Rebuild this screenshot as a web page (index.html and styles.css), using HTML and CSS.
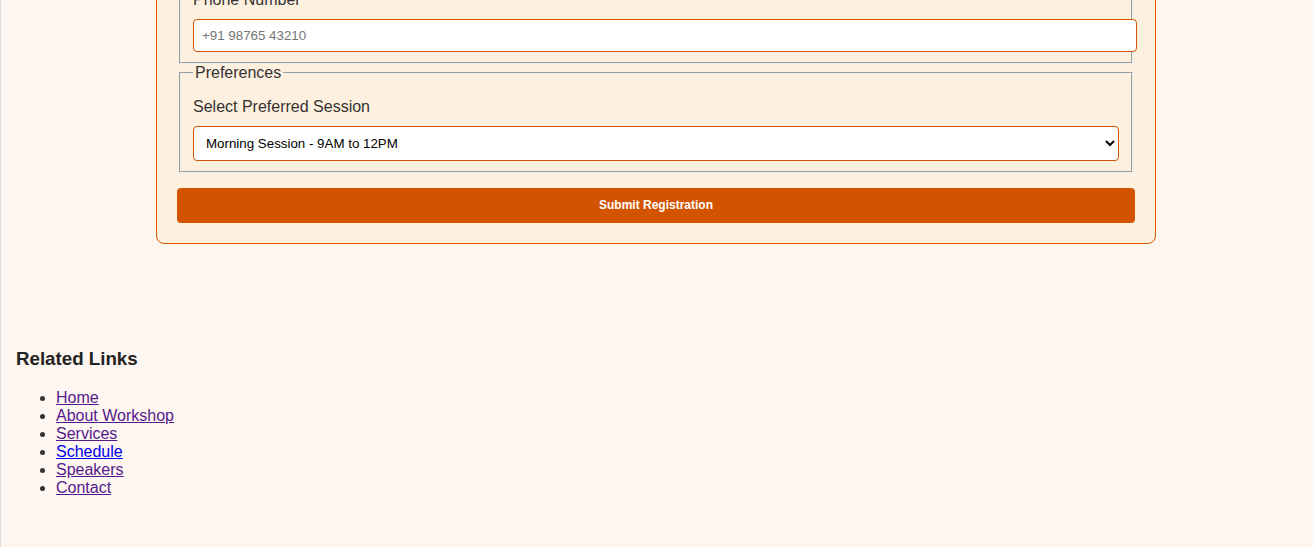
FILE: index.html
```html
<!DOCTYPE html>
<html lang="en">
<head>
<meta charset="utf-8">
<title>Workshop Registration</title>
<link rel="stylesheet" href="styles.css">
</head>
<body>
<main class="page">
  <section class="card">
    <form class="reg-form">
      <fieldset class="group">
        <legend>Personal Details</legend>
        <div class="field">
          <label for="name">Full Name</label>
          <input id="name" type="text" placeholder="Your full name">
        </div>
        <div class="field">
          <label for="email">Email Address</label>
          <input id="email" type="email" placeholder="you@example.com">
        </div>
        <div class="field">
          <label for="phone">Phone Number</label>
          <input id="phone" type="tel" placeholder="+91 98765 43210">
        </div>
      </fieldset>
      <fieldset class="group">
        <legend>Preferences</legend>
        <div class="field">
          <label for="session">Select Preferred Session</label>
          <select id="session">
            <option>Morning Session - 9AM to 12PM</option>
            <option>Afternoon Session - 1PM to 4PM</option>
            <option>Evening Session - 5PM to 8PM</option>
          </select>
        </div>
      </fieldset>
      <button type="submit" class="submit">Submit Registration</button>
    </form>
  </section>
</main>
<aside class="related">
  <h3>Related Links</h3>
  <ul>
    <li><a class="visited" href="#home">Home</a></li>
    <li><a class="visited" href="#about">About Workshop</a></li>
    <li><a class="visited" href="#services">Services</a></li>
    <li><a class="fresh" href="#schedule">Schedule</a></li>
    <li><a class="visited" href="#speakers">Speakers</a></li>
    <li><a class="visited" href="#contact">Contact</a></li>
  </ul>
</aside>
</body>
</html>
```
FILE: styles.css
```css
html {
  min-height: 100%;
  box-shadow: inset 1px 0 0 #dcdcdc;
}

body {
  margin: 0;
  background: #fef6f0;
  color: #333;
  font-family: "Liberation Sans", Arial, sans-serif;
  font-size: 16px;
}

.page {
  padding: 0 1px 60px 0;
}

.card {
  box-sizing: border-box;
  max-width: 1000px;
  margin: -209px auto 0;
  padding: 20px;
  background: #fef0df;
  border: 1px solid #d35400;
  border-radius: 8px;
}

.group {
  margin: 0 2px;
  color: #333;
}

.field {
  margin-top: 11px;
}

.field label {
  display: block;
  margin-bottom: 10px;
}

.field input {
  width: 100%;
  padding: 8px;
  border: 1px solid #d35400;
  border-radius: 4px;
  background: #fff;
  font-family: "Liberation Sans", Arial, sans-serif;
  font-size: 13.33px;
  color: #333;
}

.field input::placeholder {
  color: #757575;
}

.field select {
  box-sizing: border-box;
  width: 100%;
  padding: 8px;
  border: 1px solid #d35400;
  border-radius: 4px;
  background: #fff;
  font-family: "Liberation Sans", Arial, sans-serif;
  font-size: 13.33px;
  color: #000;
}

.submit {
  display: block;
  width: 100%;
  margin-top: 15px;
  padding: 10px;
  border: none;
  border-radius: 4px;
  background: #d35400;
  color: #fff;
  font-family: "Liberation Sans", Arial, sans-serif;
  font-size: 12px;
  font-weight: bold;
  line-height: 15px;
}

.related {
  padding: 25px 16px;
}

.related h3 {
  margin: 18.72px 0;
  font-size: 18.72px;
  color: #222;
}

.related ul {
  margin: 0;
  padding-left: 40px;
}

.related a.visited {
  color: #551a8b;
}

.related a.fresh {
  color: #0000ee;
}
```
